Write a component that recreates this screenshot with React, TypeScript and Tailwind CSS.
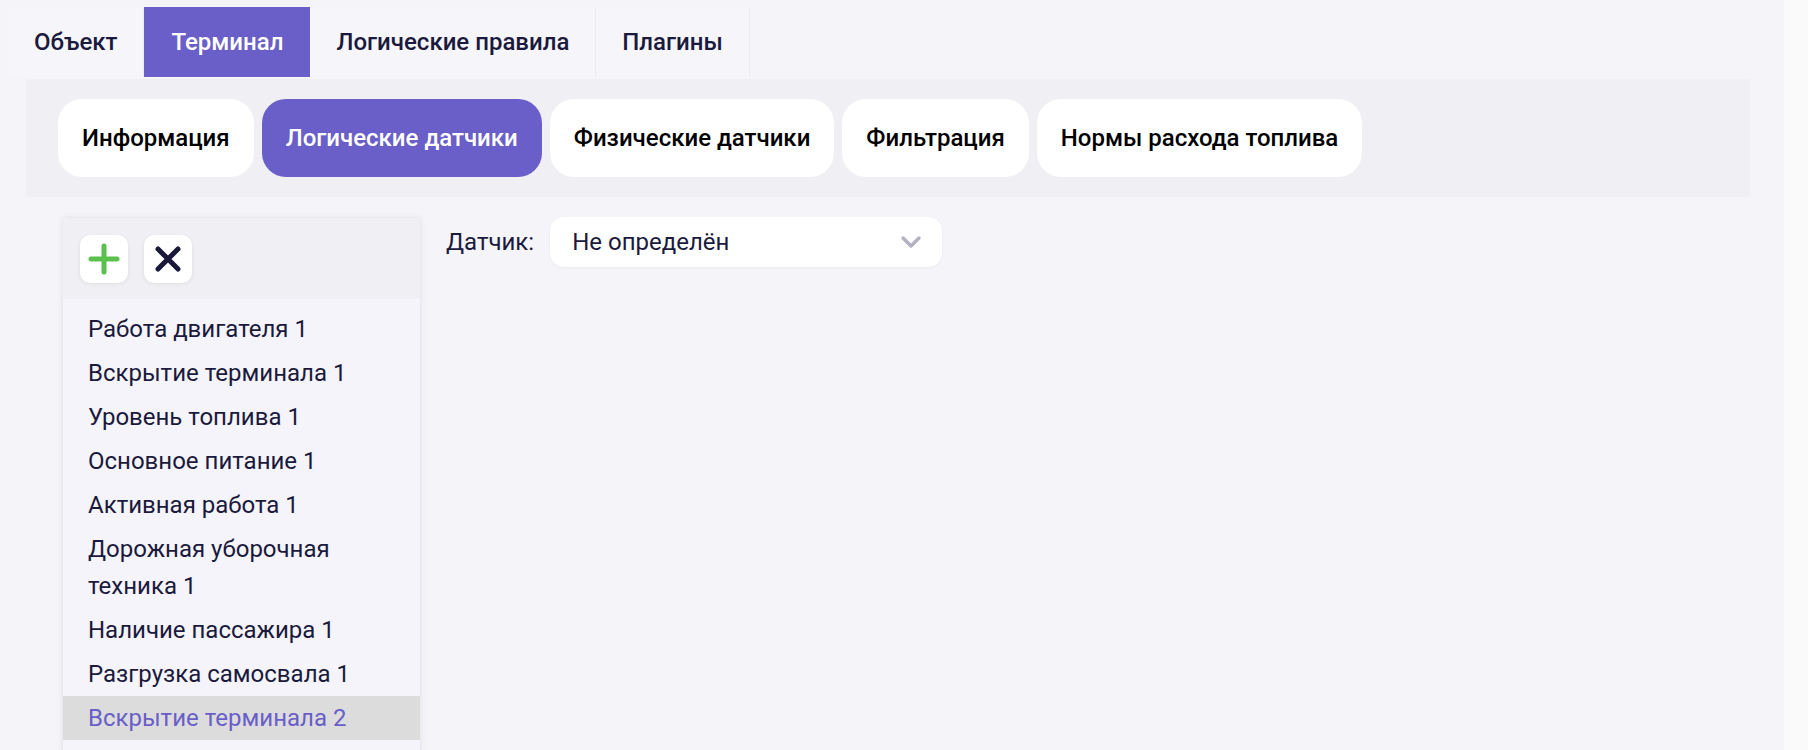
import { useState } from 'react';

const topTabs = ['Объект', 'Терминал', 'Логические правила', 'Плагины'];
const subTabs = ['Информация', 'Логические датчики', 'Физические датчики', 'Фильтрация', 'Нормы расхода топлива'];
const sensors = [
  'Работа двигателя 1',
  'Вскрытие терминала 1',
  'Уровень топлива 1',
  'Основное питание 1',
  'Активная работа 1',
  'Дорожная уборочная техника 1',
  'Наличие пассажира 1',
  'Разгрузка самосвала 1',
  'Вскрытие терминала 2',
];

export default function App() {
  const [tab] = useState(1);
  const [subTab] = useState(1);
  const [selected] = useState(8);

  return (
    <div className="flex h-screen overflow-hidden bg-[#f4f4f9] font-['Roboto','Liberation_Sans',sans-serif] text-[#1b1a3d]">
      <div className="flex-1 pt-[7px]">
        <div className="flex pl-[8px]">
          {topTabs.map((t, i) => (
            <div
              key={t}
              className={
                i === tab
                  ? 'flex h-[70px] items-center bg-[#6a5ec8] px-[27px] text-[24px] font-medium text-white'
                  : 'flex h-[70px] items-center border-r border-[#ececf2] bg-[#f6f5fa] px-[26px] text-[24px] font-medium'
              }
            >
              {t}
            </div>
          ))}
        </div>

        <div className="ml-[26px] mr-[34px] mt-[2px] flex gap-[8px] bg-[#efeff4] px-[32px] py-[20px]">
          {subTabs.map((t, i) => (
            <div
              key={t}
              className={
                i === subTab
                  ? 'flex h-[78px] items-center rounded-[24px] bg-[#6a5ec8] px-[24px] text-[24px] font-medium text-white'
                  : 'flex h-[78px] items-center rounded-[24px] bg-white px-[24px] text-[24px] font-medium text-black'
              }
            >
              {t}
            </div>
          ))}
        </div>

        <div className="mt-[20px] flex items-start gap-[26px] pl-[63px]">
          <div className="mt-[1px] w-[357px] rounded-t-[4px] bg-[#f5f4fa] shadow-[0_0_6px_rgba(0,0,0,0.1)]">
            <div className="flex gap-[16px] bg-[#efeff4] px-[17px] pb-[16px] pt-[17px]">
              <button className="flex h-[48px] w-[48px] items-center justify-center rounded-[10px] bg-white shadow-[0_1px_4px_rgba(0,0,0,0.08)]">
                <svg width="32" height="32" viewBox="0 0 32 32">
                  <path d="M16 3v26M3 16h26" stroke="#5cc04e" strokeWidth="5" strokeLinecap="round" />
                </svg>
              </button>
              <button className="flex h-[48px] w-[48px] items-center justify-center rounded-[10px] bg-white shadow-[0_1px_4px_rgba(0,0,0,0.08)]">
                <svg width="26" height="26" viewBox="0 0 26 26">
                  <path d="M3 3l20 20M23 3L3 23" stroke="#1a1838" strokeWidth="5" strokeLinecap="round" />
                </svg>
              </button>
            </div>
            <ul className="pb-[40px] pt-[8px]">
              {sensors.map((s, i) => (
                <li
                  key={s}
                  className={
                    i === selected
                      ? 'bg-[#dcdcdc] py-[3.5px] pl-[25px] pr-[60px] text-[24px] leading-[37px] text-[#6a5ec8]'
                      : 'py-[3.5px] pl-[25px] pr-[60px] text-[24px] leading-[37px]'
                  }
                >
                  {s}
                </li>
              ))}
            </ul>
          </div>

          <div className="flex items-center gap-[16px]">
            <span className="text-[24px]">Датчик:</span>
            <div className="flex h-[50px] w-[392px] items-center justify-between rounded-[14px] bg-white pl-[22px] pr-[20px] text-[24px] shadow-[0_1px_3px_rgba(0,0,0,0.05)]">
              <span>Не определён</span>
              <svg width="22" height="14" viewBox="0 0 22 14">
                <path d="M3 3l8 8 8-8" fill="none" stroke="#b4b2c2" strokeWidth="3.5" strokeLinecap="round" strokeLinejoin="round" />
              </svg>
            </div>
          </div>
        </div>
      </div>
      <div className="w-[24px] bg-[#fafafa]" />
    </div>
  );
}
